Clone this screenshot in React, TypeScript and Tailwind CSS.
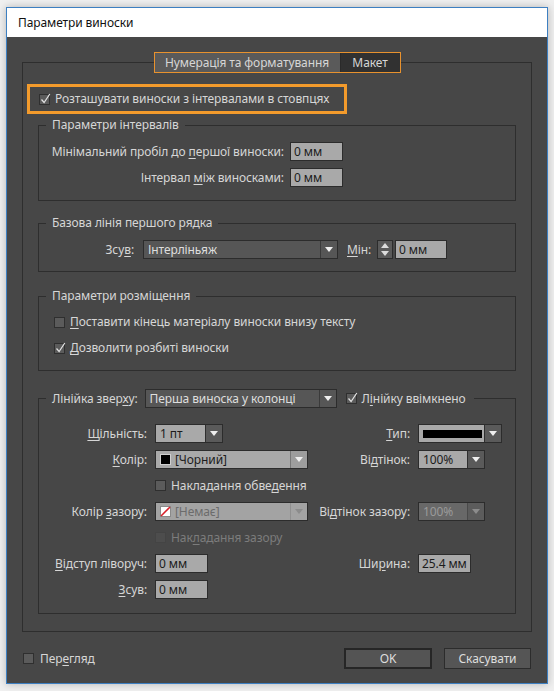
import type { ReactNode } from "react";

function Arrow({ color = "#efefef" }: { color?: string }) {
  return (
    <svg width="8" height="5" viewBox="0 0 8 5">
      <path d="M0 0h8L4 5z" fill={color} />
    </svg>
  );
}

function Checkbox({ checked, disabled }: { checked?: boolean; disabled?: boolean }) {
  return (
    <span
      className={`relative h-[11px] w-[11px] shrink-0 border ${
        disabled ? "border-[#444] bg-[#4d4d4d]" : "border-[#2f2f2f] bg-[#5b5b5b]"
      }`}
    >
      {checked && (
        <svg className="absolute -top-[2px] left-0" width="11" height="12" viewBox="0 0 11 12">
          <path d="M1.5 6.5l2.6 3L9.8 1" fill="none" stroke="#e4e4e4" strokeWidth="1.2" />
        </svg>
      )}
    </span>
  );
}

function Field({ className, value }: { className: string; value: string }) {
  return (
    <div
      className={`flex h-[19px] items-center border border-[#2c2c2c] bg-[#a9a9a9] pl-[3px] text-[#1c1c1c] ${className}`}
    >
      {value}
    </div>
  );
}

type Variant = "dark" | "light" | "lightAll" | "offLight" | "offDark";

const bodyBg: Record<Variant, string> = {
  dark: "bg-[#565656] text-[#dedede]",
  light: "bg-[#a9a9a9] text-[#1c1c1c]",
  lightAll: "bg-[#a9a9a9] text-[#1c1c1c]",
  offLight: "bg-[#a3a3a3] text-[#6c6c6c]",
  offDark: "bg-[#686868] text-[#9a9a9a]",
};

const arrowBg: Record<Variant, string> = {
  dark: "bg-[#565656] border-[#3a3a3a]",
  light: "bg-[#5a5a5a] border-[#2f2f2f]",
  lightAll: "bg-[#9d9d9d] border-[#777]",
  offLight: "bg-[#a3a3a3] border-[#909090]",
  offDark: "bg-[#5c5c5c] border-[#4a4a4a]",
};

function Select({
  className,
  variant,
  children,
}: {
  className: string;
  variant: Variant;
  children: ReactNode;
}) {
  const muted = variant === "offLight" || variant === "offDark";
  return (
    <div className={`flex h-[19px] border border-[#2c2c2c] ${className}`}>
      <div className={`flex min-w-0 flex-1 items-center gap-[4px] pl-[4px] ${bodyBg[variant]}`}>
        {children}
      </div>
      <div className={`flex w-[17px] items-center justify-center border-l ${arrowBg[variant]}`}>
        <Arrow color={muted ? "#8c8c8c" : "#efefef"} />
      </div>
    </div>
  );
}

function Group({ title, className, children }: { title: ReactNode; className: string; children: ReactNode }) {
  return (
    <fieldset className={`mx-[11px] border border-[#2e2e2e] ${className}`}>
      {title}
      {children}
    </fieldset>
  );
}

function Legend({ children }: { children: ReactNode }) {
  return <legend className="ml-[7px] px-[6px] leading-[16px]">{children}</legend>;
}

function U({ children }: { children: ReactNode }) {
  return <span className="underline underline-offset-2">{children}</span>;
}

export default function App() {
  return (
    <div className="h-[691px] w-[554px] overflow-hidden bg-[#f0f0f0] pl-[6px] pt-[7px] font-['Noto_Sans',sans-serif] text-[12px] tracking-[-0.1px]">
      <div className="h-[677px] w-[542px] border border-[#3d7fc1] shadow-[0_0_8px_rgba(0,0,0,0.25)]">
        <div className="flex h-[29px] items-center bg-white pl-[11px] text-[#111]">Параметри виноски</div>

        <div className="flex h-[646px] flex-col bg-[#474747] leading-[16px] text-[#d6d6d6]">
          <fieldset className="mx-[15px] mt-[15px] border border-[#2e2e2e] px-[4px] pb-[17px]">
            <legend className="mx-auto flex h-[21px] border border-[#e8922e]">
              <span className="flex w-[186px] items-center justify-center border-r border-[#2a2a2a] bg-[#5a5a5a]">
                Нумерація та форматування
              </span>
              <span className="flex w-[59px] items-center justify-center bg-[#313131]">Макет</span>
            </legend>

            <div className="mt-[11px] flex h-[30px] w-[320px] items-center gap-[5px] border-[3px] border-[#f39b2c] pl-[9px]">
              <Checkbox checked />
              <span>Розташувати виноски з інтервалами в стовпцях</span>
            </div>

            <Group className="mt-[3px] pb-[13px] pt-[9px]" title={<Legend>Параметри інтервалів</Legend>}>
              <div className="flex flex-col gap-[7px]">
                <div className="flex items-center">
                  <span className="w-[245px] text-right">
                    Мінімальний пробіл до <U>п</U>ершої виноски:
                  </span>
                  <Field className="ml-[6px] w-[53px]" value="0 мм" />
                </div>
                <div className="flex items-center">
                  <span className="w-[245px] text-right">
                    Інтервал <U>м</U>іж виносками:
                  </span>
                  <Field className="ml-[6px] w-[53px]" value="0 мм" />
                </div>
              </div>
            </Group>

            <Group className="mt-[14px] pb-[12px] pt-[9px]" title={<Legend>Базова лінія першого рядка</Legend>}>
              <div className="flex items-center">
                <span className="w-[95px] text-right">
                  Зсу<U>в</U>:
                </span>
                <Select className="ml-[9px] w-[195px]" variant="dark">
                  Інтерліньяж
                </Select>
                <span className="ml-[9px] w-[30px]">
                  <U>М</U>ін:
                </span>
                <div className="flex h-[19px] w-[16px] flex-col items-center justify-center gap-[3px] border border-[#2c2c2c] bg-[#5a5a5a]">
                  <svg width="8" height="5" viewBox="0 0 8 5">
                    <path d="M0 5h8L4 0z" fill="#dcdcdc" />
                  </svg>
                  <svg width="8" height="5" viewBox="0 0 8 5">
                    <path d="M0 0h8L4 5z" fill="#dcdcdc" />
                  </svg>
                </div>
                <Field className="ml-[2px] w-[52px]" value="0 мм" />
              </div>
            </Group>

            <Group className="mt-[16px] pb-[13px] pt-[9px]" title={<Legend>Параметри розміщення</Legend>}>
              <div className="flex flex-col gap-[8px] pl-[15px]">
                <div className="flex h-[18px] items-center gap-[5px]">
                  <Checkbox />
                  <span>
                    <U>П</U>оставити кінець матеріалу виноски внизу тексту
                  </span>
                </div>
                <div className="flex h-[18px] items-center gap-[5px]">
                  <Checkbox checked />
                  <span>
                    <U>Д</U>озволити розбиті виноски
                  </span>
                </div>
              </div>
            </Group>

            <Group
              className="mt-[18px] pb-[14px] pt-[16px]"
              title={
                <legend className="ml-[7px] flex h-[19px] items-center pl-[6px] pr-[8px]">
                  <span>
                    Лінійка звер<U>х</U>у:
                  </span>
                  <Select className="ml-[7px] w-[192px]" variant="dark">
                    Перша виноска у колонці
                  </Select>
                  <span className="ml-[9px] flex items-center gap-[5px]">
                    <Checkbox checked />
                    <span>
                      Л<U>і</U>нійку ввімкнено
                    </span>
                  </span>
                </legend>
              }
            >
              <div className="flex flex-col gap-[7px]">
                <div className="flex h-[19px] items-center">
                  <div className="flex w-[271px] items-center">
                    <span className="w-[108px] text-right">
                      <U>Щ</U>ільність:
                    </span>
                    <Select className="ml-[8px] w-[68px]" variant="light">
                      1 пт
                    </Select>
                  </div>
                  <span className="w-[100px] text-right">
                    <U>Т</U>ип:
                  </span>
                  <Select className="ml-[8px] w-[84px]" variant="light">
                    <span className="h-[8px] w-[59px] bg-black" />
                  </Select>
                </div>

                <div className="flex h-[19px] items-center">
                  <div className="flex w-[271px] items-center">
                    <span className="w-[108px] text-right">
                      <U>К</U>олір:
                    </span>
                    <Select className="ml-[8px] w-[153px]" variant="lightAll">
                      <span className="h-[11px] w-[11px] border border-[#d0d0d0] bg-black" />
                      [Чорний]
                    </Select>
                  </div>
                  <span className="w-[100px] text-right">
                    Ві<U>д</U>тінок:
                  </span>
                  <Select className="ml-[8px] w-[67px]" variant="light">
                    100%
                  </Select>
                </div>

                <div className="flex h-[19px] items-center gap-[5px] pl-[116px]">
                  <Checkbox />
                  <span>
                    Накладання обве<U>д</U>ення
                  </span>
                </div>

                <div className="flex h-[19px] items-center">
                  <div className="flex w-[271px] items-center">
                    <span className="w-[108px] text-right">
                      Колір <U>з</U>азору:
                    </span>
                    <Select className="ml-[8px] w-[153px]" variant="offLight">
                      <svg width="11" height="11" viewBox="0 0 11 11" className="shrink-0">
                        <rect x="0.5" y="0.5" width="10" height="10" fill="#fff" stroke="#8a8a8a" />
                        <path d="M1 10L10 1" stroke="#d8202a" strokeWidth="1.6" />
                      </svg>
                      [Немає]
                    </Select>
                  </div>
                  <span className="w-[100px] text-right">
                    Ві<U>д</U>тінок зазору:
                  </span>
                  <Select className="ml-[8px] w-[67px]" variant="offDark">
                    100%
                  </Select>
                </div>

                <div className="flex h-[19px] items-center gap-[5px] pl-[116px] text-[#7c7c7c]">
                  <Checkbox disabled />
                  <span>
                    Нак<U>л</U>адання зазору
                  </span>
                </div>

                <div className="flex h-[19px] items-center">
                  <div className="flex w-[271px] items-center">
                    <span className="w-[108px] text-right">
                      <U>В</U>ідступ ліворуч:
                    </span>
                    <Field className="ml-[8px] w-[53px]" value="0 мм" />
                  </div>
                  <span className="w-[100px] text-right">
                    Ши<U>р</U>ина:
                  </span>
                  <Field className="ml-[8px] w-[53px]" value="25.4 мм" />
                </div>

                <div className="flex h-[19px] items-center">
                  <span className="w-[108px] text-right">
                    <U>З</U>сув:
                  </span>
                  <Field className="ml-[8px] w-[53px]" value="0 мм" />
                </div>
              </div>
            </Group>
          </fieldset>

          <div className="mt-[16px] flex items-center pl-[16px] pr-[16px]">
            <div className="flex items-center gap-[6px]">
              <Checkbox />
              <span>
                Пер<U>е</U>гляд
              </span>
            </div>
            <button className="ml-auto h-[21px] w-[88px] border-2 border-[#262626] bg-[#545454] text-[#dedede]">
              OK
            </button>
            <button className="ml-[12px] h-[21px] w-[87px] border border-[#2c2c2c] bg-[#555555] text-[#dedede]">
              Скасувати
            </button>
          </div>
        </div>
      </div>
    </div>
  );
}
